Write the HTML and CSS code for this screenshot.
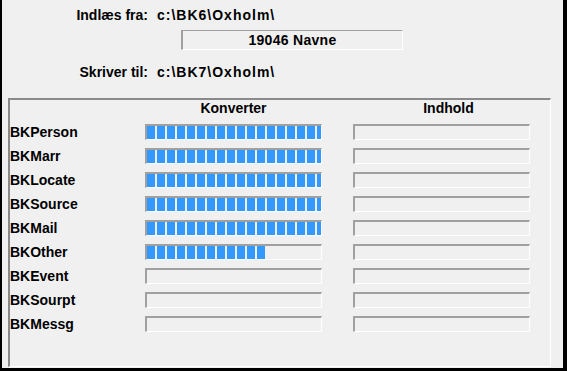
FILE: index.html
```html
<!DOCTYPE html>
<html lang="da">
<head>
<meta charset="UTF-8" />
<title>Konverter</title>
<link rel="stylesheet" href="styles.css">
</head>
<body>
<div class="window">
  <div class="top">
    <div class="path-row">
      <span class="path-label">Indlæs fra:</span>
      <span class="path-value">c:\BK6\Oxholm\</span>
    </div>
    <div class="count-box">19046 Navne</div>
    <div class="path-row path-row-out">
      <span class="path-label">Skriver til:</span>
      <span class="path-value">c:\BK7\Oxholm\</span>
    </div>
  </div>

  <div class="panel">
    <div class="grid">
      <div class="head head-konv">Konverter</div>
      <div class="head head-indh">Indhold</div>

      <div class="name">BKPerson</div>
      <div class="bar"><div class="fill" style="width:100%"></div></div>
      <div class="bar bar-right"></div>

      <div class="name">BKMarr</div>
      <div class="bar"><div class="fill" style="width:100%"></div></div>
      <div class="bar bar-right"></div>

      <div class="name">BKLocate</div>
      <div class="bar"><div class="fill" style="width:100%"></div></div>
      <div class="bar bar-right"></div>

      <div class="name">BKSource</div>
      <div class="bar"><div class="fill" style="width:100%"></div></div>
      <div class="bar bar-right"></div>

      <div class="name">BKMail</div>
      <div class="bar"><div class="fill" style="width:100%"></div></div>
      <div class="bar bar-right"></div>

      <div class="name">BKOther</div>
      <div class="bar"><div class="fill" style="width:118px"></div></div>
      <div class="bar bar-right"></div>

      <div class="name">BKEvent</div>
      <div class="bar"></div>
      <div class="bar bar-right"></div>

      <div class="name">BKSourpt</div>
      <div class="bar"></div>
      <div class="bar bar-right"></div>

      <div class="name">BKMessg</div>
      <div class="bar"></div>
      <div class="bar bar-right"></div>
    </div>
  </div>
</div>
</body>
</html>
```

FILE: styles.css
```css
html, body {
  margin: 0; padding: 0;
  width: 567px; height: 371px;
  overflow: hidden;
  background: #000;
  font-family: "Liberation Sans", Arial, sans-serif;
  font-size: 14px;
  font-weight: bold;
  color: #000;
}
.window {
  box-sizing: border-box;
  width: 567px; height: 371px;
  background: #f0f0f0;
  border-left: 2px solid #000;
  border-right: 4px solid #000;
  border-bottom: 3px solid #000;
}
.top {
  padding-top: 7px;
}
.path-row {
  display: grid;
  grid-template-columns: 146px auto;
  column-gap: 9px;
  line-height: 16px;
}
.path-row-out {
  margin-top: 14px;
}
.path-label {
  text-align: right;
}
.path-value {
  letter-spacing: 1px;
}
.count-box {
  box-sizing: border-box;
  margin: 7px 0 0 179px;
  width: 222px; height: 20px;
  border-top: 1px solid #a0a0a0;
  border-left: 2px solid #a0a0a0;
  border-right: 1px solid #fff;
  border-bottom: 1px solid #fff;
  text-align: center;
  line-height: 18px;
  letter-spacing: 0.3px;
}
.panel {
  box-sizing: border-box;
  margin: 18px 0 0 6px;
  width: 543px; height: 269px;
  border-top: 2px solid #8a8a8a;
  border-left: 2px solid #8a8a8a;
  border-right: 1px solid #fff;
  border-bottom: 1px solid #fff;
}
.grid {
  display: grid;
  grid-template-columns: 135px 177px 31px 177px;
  grid-auto-rows: 16px;
  row-gap: 8px;
  align-items: center;
}
.head {
  line-height: 16px;
  text-align: center;
}
.head-konv {
  grid-column: 2;
}
.head-indh {
  grid-column: 4;
  padding-left: 14px;
}
.name {
  grid-column: 1;
  line-height: 16px;
}
.bar {
  box-sizing: border-box;
  height: 16px;
  border-top: 2px solid #a0a0a0;
  border-left: 2px solid #a0a0a0;
  border-right: 1px solid #fff;
  border-bottom: 1px solid #fff;
  overflow: hidden;
}
.bar-right {
  grid-column: 4;
}
.fill {
  height: 13px;
  background: repeating-linear-gradient(to right, #3399ff 0, #3399ff 8px, transparent 8px, transparent 10px);
}
```
